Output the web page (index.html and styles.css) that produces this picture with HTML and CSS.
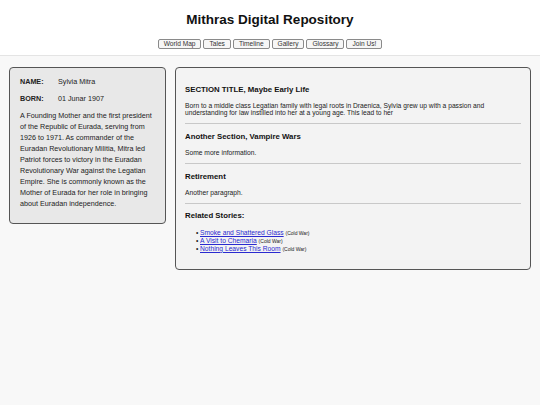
FILE: index.html
```html
<!DOCTYPE html>
<html lang="en">
<head>
    <meta charset="UTF-8">
    <meta name="viewport" content="width=device-width, initial-scale=1.0">
    <title>Sylvia Mitra - Mithras Digital Repository</title>
    <link rel="stylesheet" href="styles.css">
</head>
<body>
    <header>
        <h1>Mithras Digital Repository</h1>
        <nav>
            <button>World Map</button>
            <button>Tales</button>
            <button>Timeline</button>
            <button>Gallery</button>
            <button>Glossary</button>
            <button>Join Us!</button>
        </nav>
    </header>
    <main>
        <aside class="info-card">
            <p class="info-row"><span class="info-label">NAME:</span> Sylvia Mitra</p>
            <p class="info-row"><span class="info-label">BORN:</span> 01 Junar 1907</p>
            <p class="info-bio">A Founding Mother and the first president of the Republic of Eurada, serving from 1926 to 1971. As commander of the Euradan Revolutionary Militia, Mitra led Patriot forces to victory in the Euradan Revolutionary War against the Legatian Empire. She is commonly known as the Mother of Eurada for her role in bringing about Euradan independence.</p>
        </aside>
        <section class="article">
            <h3>SECTION TITLE, Maybe Early Life</h3>
            <p>Born to a middle class Legatian family with legal roots in Draenica, Sylvia grew up with a passion and understanding for law instilled into her at a young age. This lead to her</p>
            <hr>
            <h3>Another Section, Vampire Wars</h3>
            <p>Some more information.</p>
            <hr>
            <h3>Retirement</h3>
            <p>Another paragraph.</p>
            <hr>
            <h3>Related Stories:</h3>
            <ul>
                <li><a href="#">Smoke and Shattered Glass</a> <small>(Cold War)</small></li>
                <li><a href="#">A Visit to Chemaria</a> <small>(Cold War)</small></li>
                <li><a href="#">Nothing Leaves This Room</a> <small>(Cold War)</small></li>
            </ul>
        </section>
    </main>
</body>
</html>
```

FILE: styles.css
```css
body {
    font-family: "Liberation Sans", Arial, sans-serif;
    margin: 0;
    padding: 0;
    background-color: #f8f8f8;
    color: #111;
}

header {
    background-color: #fff;
    border-bottom: 1px solid #e4e4e4;
    text-align: center;
    padding: 12px 0 6px;
}

header h1 {
    margin: 0;
    font-size: 13.5px;
    line-height: 16px;
}

nav {
    margin-top: 11px;
    display: flex;
    justify-content: center;
    gap: 2px;
}

nav button {
    font-family: "Liberation Sans", Arial, sans-serif;
    font-size: 6.6px;
    line-height: 8px;
    padding: 0 5px;
    color: #333;
    background-color: #f6f6f6;
    border: 1px solid #8a8a8a;
    border-radius: 2px;
}

main {
    display: flex;
    align-items: flex-start;
    gap: 9px;
    padding: 11px 9px;
}

.info-card {
    width: 157px;
    box-sizing: border-box;
    flex-shrink: 0;
    background-color: #e8e8e8;
    border: 1px solid #555;
    border-radius: 4px;
    padding: 8px 10px 14px;
    font-size: 7.2px;
    line-height: 11px;
    color: #222;
}

.info-card p {
    margin: 0 0 6px;
}

.info-card p:last-child {
    margin-bottom: 0;
}

.info-label {
    display: inline-block;
    width: 36px;
    font-weight: bold;
}

.article {
    flex: 1;
    background-color: #f3f3f3;
    border: 1px solid #555;
    border-radius: 4px;
    padding: 9px;
    font-size: 6.7px;
    color: #222;
}

.article h3 {
    font-size: 7.8px;
    margin: 7.8px 0 8.4px;
    color: #111;
}

.article p {
    margin: 6.7px 0;
}

.article hr {
    border: none;
    border-top: 1px solid #c8c8c8;
    margin: 3px 0;
}

.article ul {
    list-style: none;
    margin: 6.7px 0;
    padding-left: 16px;
}

.article li {
    line-height: 8px;
}

.article li::before {
    content: "•";
    display: inline-block;
    width: 4px;
    margin-left: -5px;
}

.article a {
    color: #2a2ad0;
}

.article small {
    font-size: 5px;
}
```
